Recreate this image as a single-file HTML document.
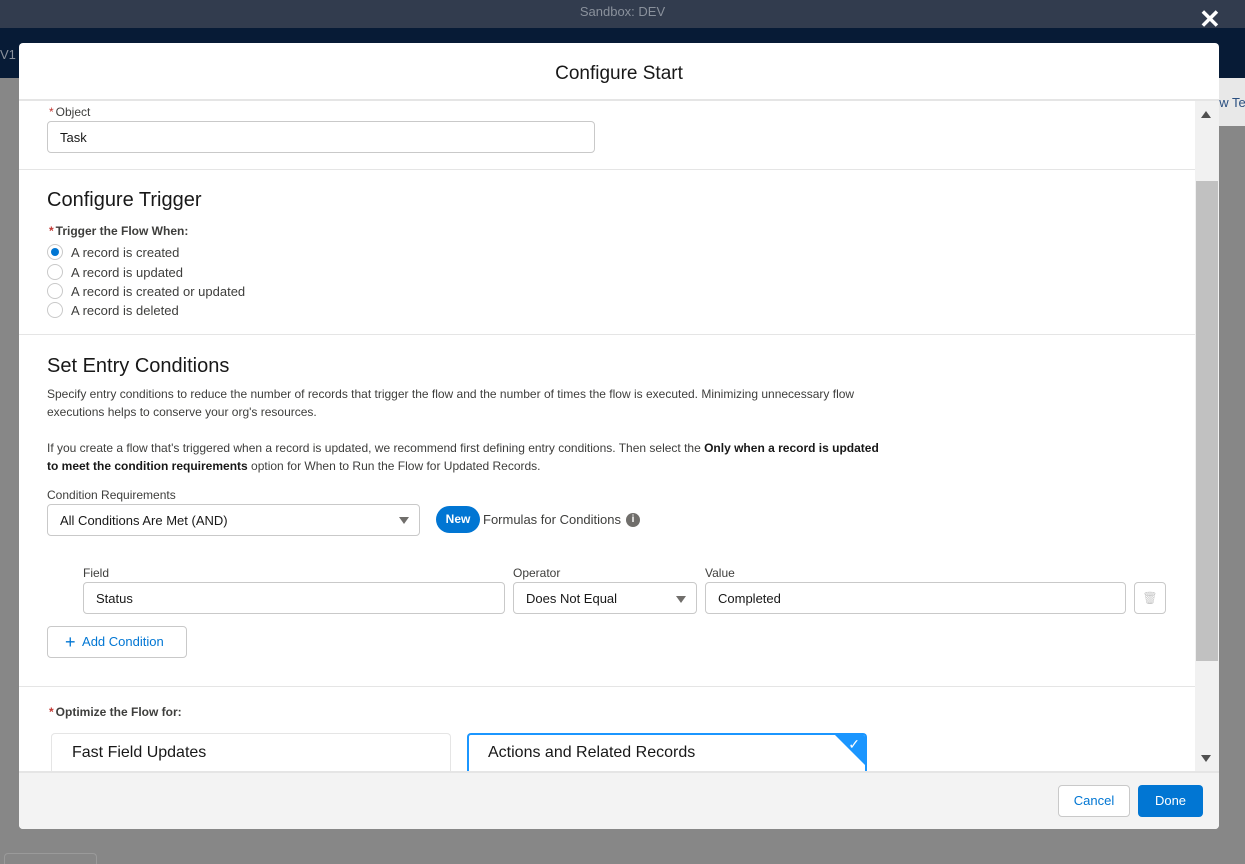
<!DOCTYPE html>
<html><head><style>
*{box-sizing:border-box;margin:0;padding:0}
html,body{width:1245px;height:864px;overflow:hidden}
body{position:relative;background:#878787;font-family:"Liberation Sans",sans-serif;color:#181818;font-size:13px}
.a{position:absolute}
.inp{position:absolute;border:1px solid #c9c9c9;border-radius:4px;background:#fff;padding-left:12px;display:flex;align-items:center;font-size:13px}
.lbl{position:absolute;font-size:12px;color:#3e3e3c}
.req{color:#c23934;margin-right:2px}
.radio{position:absolute;left:47px;width:16px;height:16px;border:1px solid #c9c9c9;border-radius:50%;background:#fff}
.rt{position:absolute;left:71px;font-size:13px;color:#3e3e3c}
.sep{position:absolute;left:0;width:1176px;height:1px;background:#e5e5e5}
.p{position:absolute;left:47px;font-size:12px;color:#3e3e3c;line-height:18px;width:840px}
.caret{position:absolute;width:0;height:0;border-left:5px solid transparent;border-right:5px solid transparent;border-top:7px solid #706e6b}
</style></head><body>
<div class="a" style="left:0;top:0;width:1245px;height:28px;background:#323c4e"></div>
<div class="a" style="left:0;top:4px;width:1245px;text-align:center;color:#8a919c;font-size:13px">Sandbox: DEV</div>
<div class="a" style="left:0;top:28px;width:1245px;height:50px;background:#071b36"></div>
<div class="a" style="left:1219px;top:78px;width:26px;height:48px;background:#e8e8e8"></div>
<div class="a" style="left:0;top:47px;color:#8a919c;font-size:13px">V1</div>
<div class="a" style="left:1212px;top:95px;color:#2a4f80;font-size:13px;white-space:nowrap">ew Te</div>
<div class="a" style="left:1199px;top:4px;color:#fff;font-size:26px;font-weight:bold">✕</div>
<div class="a" style="left:4px;top:853px;width:93px;height:11px;border:1px solid #9a9a9a;border-bottom:none;border-radius:4px 4px 0 0"></div>

<div class="a" style="left:19px;top:43px;width:1200px;height:786px;background:#fff;border-radius:4px;overflow:hidden">
 <div class="a" style="left:0;top:0;width:1200px;height:58px;border-bottom:2px solid #e5e5e5;text-align:center;font-size:19px;line-height:62px;color:#181818">Configure Start</div>
 <div class="a" style="left:0;top:58px;width:1200px;height:671px;overflow:hidden">
  <div class="a" style="left:1176px;top:0;width:24px;height:671px;background:#f1f1f1"></div>
  <div class="a" style="left:1177px;top:80px;width:22px;height:480px;background:#c1c1c1"></div>
  <div class="a" style="left:1182px;top:10px;border-left:5px solid transparent;border-right:5px solid transparent;border-bottom:7px solid #505050"></div>
  <div class="a" style="left:1182px;top:654px;border-left:5px solid transparent;border-right:5px solid transparent;border-top:7px solid #505050"></div>
 </div>
</div>
<div class="lbl" style="left:49px;top:105px"><span class="req">*</span>Object</div>
<div class="inp" style="left:47px;top:121px;width:548px;height:32px">Task</div>
<div class="sep" style="left:19px;top:169px"></div>
<div class="a" style="left:47px;top:189px;font-size:20px;color:#181818">Configure Trigger</div>
<div class="lbl" style="left:49px;top:224px;font-weight:bold"><span class="req">*</span>Trigger the Flow When:</div>
<div class="radio" style="top:244px"><div class="a" style="left:3px;top:3px;width:8px;height:8px;border-radius:50%;background:#0176d3"></div></div>
<div class="rt" style="top:245px">A record is created</div>
<div class="radio" style="top:264px"></div><div class="rt" style="top:265px">A record is updated</div>
<div class="radio" style="top:283px"></div><div class="rt" style="top:284px">A record is created or updated</div>
<div class="radio" style="top:302px"></div><div class="rt" style="top:303px">A record is deleted</div>
<div class="sep" style="left:19px;top:334px"></div>
<div class="a" style="left:47px;top:355px;font-size:20px">Set Entry Conditions</div>
<div class="p" style="top:385px">Specify entry conditions to reduce the number of records that trigger the flow and the number of times the flow is executed. Minimizing unnecessary flow executions helps to conserve your org's resources.</div>
<div class="p" style="top:439px">If you create a flow that's triggered when a record is updated, we recommend first defining entry conditions. Then select the <b style="color:#181818">Only when a record is updated to meet the condition requirements</b> option for When to Run the Flow for Updated Records.</div>
<div class="lbl" style="left:47px;top:488px">Condition Requirements</div>
<div class="inp" style="left:47px;top:504px;width:373px;height:32px">All Conditions Are Met (AND)</div>
<div class="caret" style="left:399px;top:517px"></div>
<div class="a" style="left:436px;top:506px;width:44px;height:27px;border-radius:14px;background:#0176d3;color:#fff;font-weight:bold;font-size:12px;text-align:center;line-height:27px">New</div>
<div class="a" style="left:483px;top:512px;font-size:13px;color:#3e3e3c">Formulas for Conditions</div>
<div class="a" style="left:626px;top:513px;width:14px;height:14px;border-radius:50%;background:#706e6b;color:#fff;font-size:10px;font-weight:bold;text-align:center;line-height:14px">i</div>
<div class="lbl" style="left:83px;top:566px">Field</div>
<div class="inp" style="left:83px;top:582px;width:422px;height:32px">Status</div>
<div class="lbl" style="left:513px;top:566px">Operator</div>
<div class="inp" style="left:513px;top:582px;width:184px;height:32px">Does Not Equal</div>
<div class="caret" style="left:676px;top:596px"></div>
<div class="lbl" style="left:705px;top:566px">Value</div>
<div class="inp" style="left:705px;top:582px;width:421px;height:32px">Completed</div>
<div class="a" style="left:1134px;top:582px;width:32px;height:32px;border:1px solid #c9c9c9;border-radius:4px;background:#fff;color:#c9c9c9;text-align:center;line-height:30px;font-size:12px">🗑</div>
<div class="a" style="left:47px;top:626px;width:140px;height:32px;border:1px solid #c9c9c9;border-radius:4px;background:#fff;color:#0176d3;font-size:13px;line-height:30px;padding-left:17px"><span style="font-size:18px;vertical-align:-2px">+</span>&nbsp; Add Condition</div>
<div class="sep" style="left:19px;top:686px"></div>
<div class="lbl" style="left:49px;top:705px;font-weight:bold"><span class="req">*</span>Optimize the Flow for:</div>
<div class="a" style="left:51px;top:733px;width:400px;height:40px;border:1px solid #e5e5e5;border-bottom:none;border-radius:4px 4px 0 0;padding:10px 20px;font-size:16px">Fast Field Updates</div>
<div class="a" style="left:467px;top:733px;width:400px;height:40px;border:2px solid #1b96ff;border-bottom:none;border-radius:4px 4px 0 0;padding:9px 19px;font-size:16px;overflow:hidden">Actions and Related Records
 <div class="a" style="right:-2px;top:-2px;width:0;height:0;border-top:34px solid #1b96ff;border-left:34px solid transparent"></div>
 <div class="a" style="right:5px;top:1px;color:#fff;font-size:14px">✓</div>
</div>
<div class="a" style="left:19px;top:771px;width:1200px;height:58px;background:#f3f3f3;border-top:2px solid #e5e5e5;border-radius:0 0 4px 4px"></div>
<div class="a" style="left:1058px;top:785px;width:72px;height:32px;border:1px solid #c9c9c9;border-radius:4px;background:#fff;color:#0176d3;text-align:center;line-height:30px">Cancel</div>
<div class="a" style="left:1138px;top:785px;width:65px;height:32px;border-radius:4px;background:#0176d3;color:#fff;text-align:center;line-height:32px">Done</div>
</body></html>
